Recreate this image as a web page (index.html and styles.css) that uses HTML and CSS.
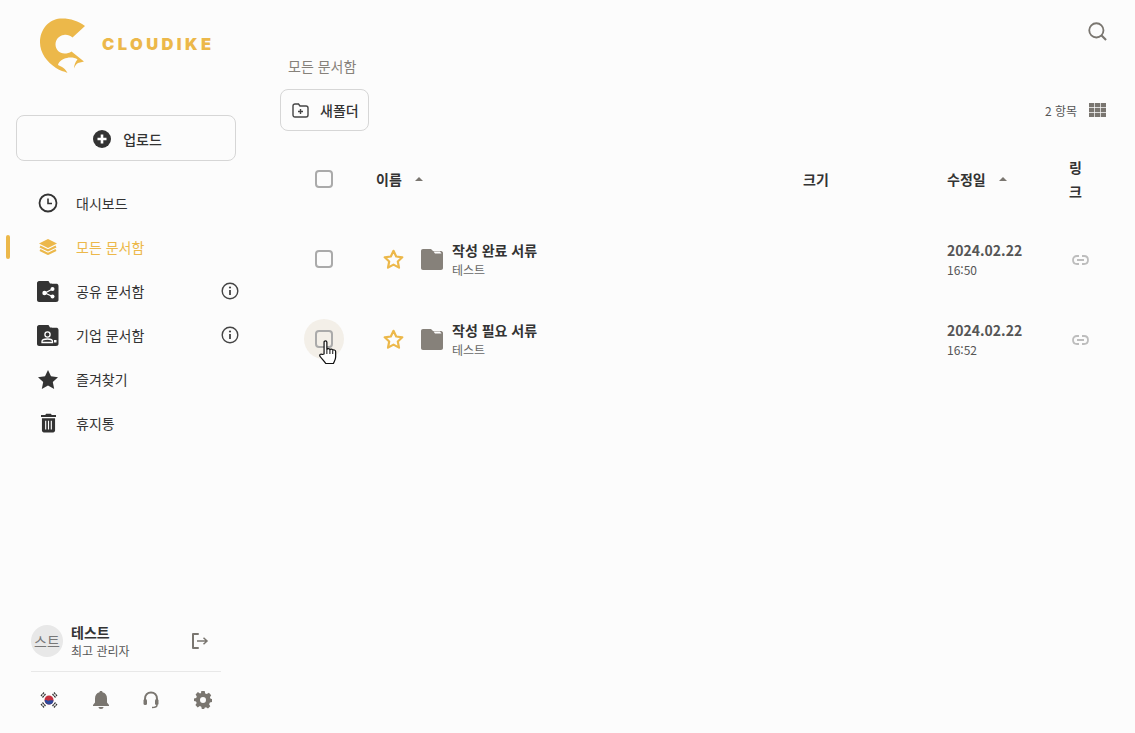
FILE: index.html
```html
<!DOCTYPE html>
<html lang="ko">
<head>
<meta charset="utf-8">
<title>Cloudike</title>
<link rel="stylesheet" href="styles.css">
</head>
<body>
<div class="app">
  <aside class="sidebar">
    <div class="logo">
      <svg class="logo-mark" width="46" height="56" viewBox="0 0 46 56"><path fill="#ecb84a" d="M20 .5C29 0 38 2.500 45 8L32.500 19.500C30 17.500 27 16.500 24 17C19 17.500 15.500 21.500 15.500 26.500C15.500 31.500 19.500 35.500 24.500 35.500C27 35.500 29.500 35 31.500 33.500L44 43.500L38 45C36 46 35 48 34 50.500C34 47 35.500 43.500 37.500 41.500C35 39.500 30 39 27 40C23 40.500 19 43 18 47L22 49C24 50 26 52 27.500 55C24 53 20 53 16 50C7 44 0 35 0 24.500C0 11 9 1.500 20 .5Z"/></svg>
      <span class="logo-text">CLOUDIKE</span>
    </div>
    <button class="upload-btn" type="button">
      <svg width="18" height="18" viewBox="0 0 18 18"><circle cx="9" cy="9" r="9" fill="#333"/><path d="M9 4.500V13.500M4.500 9H13.500" stroke="#fff" stroke-width="2.600"/></svg>
      <span>업로드</span>
    </button>
    <nav class="nav">
      <a class="nav-item"><span class="nav-icon"><svg width="20" height="20" viewBox="0 0 20 20"><circle cx="10" cy="10" r="8.500" fill="none" stroke="#333" stroke-width="1.800"/><path d="M10 5.500V10.500H14" fill="none" stroke="#333" stroke-width="1.600"/></svg></span><span>대시보드</span></a>
      <a class="nav-item active"><span class="nav-icon"><svg width="18" height="16" viewBox="0 0 18 16"><path fill="#ecb84a" d="M9 0L18 4.500L9 9L0 4.500Z"/><path fill="none" stroke="#ecb84a" stroke-width="2" d="M1 7.500L9 11.500L17 7.500M1 11L9 15L17 11"/></svg></span><span>모든 문서함</span></a>
      <a class="nav-item"><span class="nav-icon"><svg width="22" height="21" viewBox="0 0 22 21"><path fill="#333" d="M2 0H11.500L13 2.500H19C20.500 2.500 21.500 3.500 21.500 5V19C21.500 20 20.500 21 19 21H2C1 21 0 20 0 19V2C0 1 1 0 2 0Z"/><path fill="#fff" d="M14 1H18.500L20 2.500H15Z"/><path d="M15.500 8L8 12L15.500 15.500" fill="none" stroke="#fff" stroke-width="1.200"/><circle cx="15.500" cy="8" r="2" fill="#fff"/><circle cx="7.500" cy="12" r="2.200" fill="#fff"/><circle cx="15.500" cy="15.500" r="2" fill="#fff"/></svg></span><span>공유 문서함</span><svg class="info" width="18" height="18" viewBox="0 0 18 18"><circle cx="9" cy="9" r="7.800" fill="none" stroke="#444" stroke-width="1.400"/><path d="M9 8V13" stroke="#444" stroke-width="1.800"/><circle cx="9" cy="5.500" r="1.100" fill="#444"/></svg></a>
      <a class="nav-item"><span class="nav-icon"><svg width="22" height="21" viewBox="0 0 22 21"><path fill="#333" d="M2 0H11.500L13 2.500H19C20.500 2.500 21.500 3.500 21.500 5V19C21.500 20 20.500 21 19 21H2C1 21 0 20 0 19V2C0 1 1 0 2 0Z"/><path fill="#fff" d="M14 1H18.500L20 2.500H15Z"/><circle cx="10.500" cy="9.500" r="2.600" fill="none" stroke="#fff" stroke-width="1.300"/><path d="M5 17.500V16.500C5 15 7.500 14 10.500 14C13.500 14 15.500 15 15.500 16.500V17.500Z" fill="none" stroke="#fff" stroke-width="1.300"/><path d="M17 15H19.500V17.500H17Z" fill="#fff"/></svg></span><span>기업 문서함</span><svg class="info" width="18" height="18" viewBox="0 0 18 18"><circle cx="9" cy="9" r="7.800" fill="none" stroke="#444" stroke-width="1.400"/><path d="M9 8V13" stroke="#444" stroke-width="1.800"/><circle cx="9" cy="5.500" r="1.100" fill="#444"/></svg></a>
      <a class="nav-item"><span class="nav-icon"><svg width="20" height="19" viewBox="0 0 20 19"><path fill="#333" d="M10 0L13 6.300L20 7.200L14.800 12L16.200 19L10 15.500L3.800 19L5.200 12L0 7.200L7 6.300Z"/></svg></span><span>즐겨찾기</span></a>
      <a class="nav-item"><span class="nav-icon"><svg width="15" height="20" viewBox="0 0 16 20"><path fill="#333" d="M5.500 0H10.500L11.500 1.500H16V3.500H0V1.500H4.500ZM1 5H15V18C15 19 14 20 13 20H3C2 20 1 19 1 18Z"/><path d="M5 7.500V17M8 7.500V17M11 7.500V17" stroke="#fff" stroke-width="1.200"/></svg></span><span>휴지통</span></a>
    </nav>
    <div class="account">
      <div class="user">
        <span class="avatar">스트</span>
        <div class="user-info"><strong>테스트</strong><span>최고 관리자</span></div>
        <svg class="logout" width="18" height="16" viewBox="0 0 18 16"><path d="M7 1H2V15H7" fill="none" stroke="#7a7670" stroke-width="2" stroke-linecap="round" stroke-linejoin="round"/><path d="M6 8H16M12.500 4.800L16 8L12.500 11.200" fill="none" stroke="#7a7670" stroke-width="1.500"/></svg>
      </div>
      <div class="tools">
        <svg width="18" height="18" viewBox="0 0 18 18"><circle cx="9" cy="9" r="4.500" fill="#c6303e"/><path d="M4.600 9.500C6 8 7.500 10.500 9 9.500C10.500 8.500 12 10 13.500 9C13.500 12 11.500 13.500 9 13.500C6.500 13.500 4.800 11.800 4.600 9.500Z" fill="#2c4a9c"/><path d="M1 5L4 1.500M2.500 6.500L5.500 3M12.500 3L15.500 6.500M14 1.500L17 5M1 13L4 16.500M2.500 11.500L5.500 15M12.500 15L15.500 11.500M14 16.500L17 13" stroke="#333" stroke-width="1.200" stroke-dasharray="2 .6"/></svg>
        <svg width="16" height="18" viewBox="0 0 16 18"><path fill="#7a7670" d="M8 0C9 0 9.500 .5 9.500 1.300C12.500 2 14 4.500 14 7.500V11.500L16 14V15H0V14L2 11.500V7.500C2 4.500 3.500 2 6.500 1.300C6.500 .5 7 0 8 0ZM5.500 16H10.500C10.500 17 9.500 18 8 18C6.500 18 5.500 17 5.500 16Z"/></svg>
        <svg width="16" height="18" viewBox="0 0 16 18"><path d="M2 10V8C2 4 4.500 1.500 8 1.500C11.500 1.500 14 4 14 8V10" fill="none" stroke="#7a7670" stroke-width="2"/><rect x="0.500" y="8" width="3.500" height="6" rx="1.500" fill="#7a7670"/><rect x="12" y="8" width="3.500" height="6" rx="1.500" fill="#7a7670"/><path d="M14 14C14 16 12 16.500 9 16.500" fill="none" stroke="#7a7670" stroke-width="1.500"/></svg>
        <svg width="18" height="18" viewBox="0 0 18 18"><path fill="#7a7670" fill-rule="evenodd" d="M7.300 0H10.700L11.200 2.400L12.800 3.100L14.900 1.800L17.200 4.200L15.900 6.200L16.600 7.800L18 8V11L15.900 11.600L15.100 13.200L16.300 15.300L14 17.500L12 16.200L10.600 16.800L10.200 18H7.800L7.300 15.800L5.800 15.100L3.700 16.400L1.400 14.100L2.700 12L2 10.500L0 10V7.500L2.200 7L2.800 5.400L1.600 3.400L3.900 1.100L6 2.400L7 1.900ZM9 6A3 3 0 1 0 9 12A3 3 0 1 0 9 6Z"/></svg>
      </div>
    </div>
  </aside>
  <main class="main">
    <div class="topbar">
      <svg width="19" height="19" viewBox="0 0 20 20"><circle cx="8.800" cy="8.800" r="7.500" fill="none" stroke="#7a7670" stroke-width="1.900"/><path d="M14.300 14.300L19 19" stroke="#7a7670" stroke-width="2.200"/></svg>
    </div>
    <div class="crumb">모든 문서함</div>
    <div class="toolbar">
      <button class="folder-btn" type="button">
        <svg width="17" height="15" viewBox="0 0 17 15"><path d="M1 3C1 1.800 1.800 1 3 1H6.500L8 3H14C15.200 3 16 3.800 16 5V12C16 13.200 15.200 14 14 14H3C1.800 14 1 13.200 1 12Z" fill="none" stroke="#444" stroke-width="1.400"/><path d="M8.500 6V11M6 8.500H11" stroke="#444" stroke-width="1.400"/></svg>
        <span>새폴더</span>
      </button>
      <div class="view">
        <span class="count">2 항목</span>
        <svg width="17" height="14" viewBox="0 0 17 14"><path fill="#7a7670" d="M0 0H5.200V4.200H0ZM5.900 0H11.100V4.200H5.900ZM11.800 0H17V4.200H11.800ZM0 4.900H5.200V9.100H0ZM5.900 4.900H11.100V9.100H5.900ZM11.800 4.900H17V9.100H11.800ZM0 9.800H5.200V14H0ZM5.900 9.800H11.100V14H5.900ZM11.800 9.800H17V14H11.800Z"/></svg>
      </div>
    </div>
    <div class="table">
      <div class="row head">
        <div class="cell-check"><span class="check"></span></div>
        <div class="th">이름<i class="sort"></i></div>
        <div class="th">크기</div>
        <div class="th">수정일<i class="sort"></i></div>
        <div class="th link-head">링크</div>
      </div>
      <div class="row item">
        <div class="cell-check"><span class="check"></span></div>
        <div class="name-cell">
          <svg class="star" width="21" height="20" viewBox="0 0 21 20"><path fill="none" stroke="#ecb84a" stroke-width="2.200" stroke-linejoin="round" d="M10.500 1.800L13.200 7.500L19.300 8.300L14.800 12.500L16 18.600L10.500 15.600L5 18.600L6.200 12.500L1.700 8.300L7.800 7.500Z"/></svg>
          <svg width="22" height="21" viewBox="0 0 22 21"><path fill="#86817a" d="M2 0H10L12 2H20C21.200 2 22 3 22 4V19C22 20.200 21.200 21 20 21H2C.8 21 0 20.200 0 19V2C0 .8 .8 0 2 0Z"/><path fill="#fff" d="M12.500 2.500H19L20.500 4.500H14Z"/></svg>
          <div class="name-text"><strong>작성 완료 서류</strong><span>테스트</span></div>
        </div>
        <div></div>
        <div class="date"><strong>2024.02.22</strong><span>16:50</span></div>
        <div class="link-cell"><svg width="17" height="10" viewBox="0 0 17 10"><path d="M7 1H5C2.500 1 1 2.800 1 5C1 7.200 2.500 9 5 9H7M10 1H12C14.500 1 16 2.800 16 5C16 7.200 14.500 9 12 9H10M5 5H12" fill="none" stroke="#bdbdbd" stroke-width="1.800"/></svg></div>
      </div>
      <div class="row item">
        <div class="cell-check"><span class="hover-dot"><span class="check"></span></span>
          <svg class="cursor" width="18" height="25" viewBox="0 0 16 25" preserveAspectRatio="none"><path fill="#fff" stroke="#111" stroke-width="1.100" stroke-linejoin="round" d="M4.500 14V2.200C4.500 .4 7 .4 7 2.200V9.500C7.300 8.300 9.500 8.300 9.700 9.800C10 8.800 12 8.800 12.200 10.300C12.500 9.600 14.800 9.700 14.800 11.500V17C14.800 20 13.500 21.500 12.800 23.500H6C4.500 21 3 19.500 1 16.500C0 15 1.500 13.300 3 14.500Z"/><path d="M7 10V14M9.700 10V14M12.200 10.500V14" stroke="#111" stroke-width=".9"/></svg>
        </div>
        <div class="name-cell">
          <svg class="star" width="21" height="20" viewBox="0 0 21 20"><path fill="none" stroke="#ecb84a" stroke-width="2.200" stroke-linejoin="round" d="M10.500 1.800L13.200 7.500L19.300 8.300L14.800 12.500L16 18.600L10.500 15.600L5 18.600L6.200 12.500L1.700 8.300L7.800 7.500Z"/></svg>
          <svg width="22" height="21" viewBox="0 0 22 21"><path fill="#86817a" d="M2 0H10L12 2H20C21.200 2 22 3 22 4V19C22 20.200 21.200 21 20 21H2C.8 21 0 20.200 0 19V2C0 .8 .8 0 2 0Z"/><path fill="#fff" d="M12.500 2.500H19L20.500 4.500H14Z"/></svg>
          <div class="name-text"><strong>작성 필요 서류</strong><span>테스트</span></div>
        </div>
        <div></div>
        <div class="date"><strong>2024.02.22</strong><span>16:52</span></div>
        <div class="link-cell"><svg width="17" height="10" viewBox="0 0 17 10"><path d="M7 1H5C2.500 1 1 2.800 1 5C1 7.200 2.500 9 5 9H7M10 1H12C14.500 1 16 2.800 16 5C16 7.200 14.500 9 12 9H10M5 5H12" fill="none" stroke="#bdbdbd" stroke-width="1.800"/></svg></div>
      </div>
    </div>
  </main>
</div>
</body>
</html>
```
FILE: styles.css
```css
* { box-sizing: border-box; }
html, body { margin: 0; height: 100%; }
body {
  background: #fcfcfc;
  color: #333;
  font-family: "Noto Sans CJK KR", "Noto Sans", sans-serif;
  font-size: 14px;
  overflow: hidden;
}
svg { display: block; flex: none; }
.app { display: flex; height: 733px; }

.sidebar { width: 260px; flex: none; display: flex; flex-direction: column; padding: 0 16px; }
.logo { height: 115px; display: flex; align-items: flex-start; padding: 18px 0 0 24px; }
.logo-mark { margin-right: 16px; }
.logo-text {
  font-family: Inter, sans-serif;
  font-weight: 900;
  font-size: 16.5px;
  line-height: 18px;
  letter-spacing: 3.4px;
  color: #ecb84a;
  margin-top: 17px;
}
.upload-btn {
  width: 220px; height: 46px;
  display: flex; align-items: center; justify-content: center; gap: 12px;
  padding: 1px 0 0 3px;
  background: transparent;
  border: 1px solid #d6d6d6; border-radius: 8px;
  font: 500 14px "Noto Sans CJK KR", sans-serif;
  color: #333;
}
.nav { margin-top: 20px; display: flex; flex-direction: column; }
.nav-item { height: 44px; display: flex; align-items: center; position: relative; color: #333; }
.nav-icon { width: 60px; padding: 0 16px 0 20px; display: flex; justify-content: center; }
.nav-item.active { color: #ecb84a; }
.nav-item.active::before {
  content: ""; position: absolute; left: -10px; top: 10px;
  width: 4px; height: 24px; border-radius: 2px; background: #ecb84a;
}
.info { position: absolute; left: 205px; top: 13px; }

.account { margin-top: auto; padding: 0 23px 4px 15px; }
.user { display: flex; align-items: center; height: 46px; padding-bottom: 2px; }
.avatar {
  width: 32px; height: 32px; border-radius: 50%;
  background: #e8e8e8; color: #777;
  font-size: 14px; display: flex; align-items: center; justify-content: center;
}
.user-info { margin-left: 8px; display: flex; flex-direction: column; }
.user-info strong { font-size: 14px; font-weight: 700; line-height: 20px; color: #333; }
.user-info span { font-size: 12px; line-height: 18px; color: #555; }
.logout { margin-left: auto; margin-right: 12px; }
.tools {
  margin-top: 6px;
  border-top: 1px solid #e8e8e8;
  height: 58px;
  display: flex; align-items: center; justify-content: space-between;
  padding: 0 9px 2px;
}

.main { flex: 1; min-width: 0; padding: 0 20px; display: flex; flex-direction: column; }
.topbar { height: 56px; display: flex; justify-content: flex-end; padding: 22px 8px 0 0; }
.crumb { font-size: 14px; line-height: 20px; color: #86817a; padding-left: 8px; }
.toolbar { margin-top: 13px; display: flex; justify-content: space-between; align-items: center; }
.folder-btn {
  width: 89px; height: 42px;
  display: flex; align-items: center; gap: 11px; padding: 0 0 0 11px;
  background: transparent; border: 1px solid #d6d6d6; border-radius: 8px;
  font: 500 14px "Noto Sans CJK KR", sans-serif; color: #333;
}
.view { display: flex; align-items: center; gap: 12px; padding-right: 9px; }
.count { font-size: 12px; color: #555; }

.table { margin: 24px 0 0 16px; }
.row { display: grid; grid-template-columns: 80px 427px 144px 122px 38px; align-items: center; }
.head { height: 48px; margin-bottom: 16px; }
.item { height: 80px; }
.cell-check { position: relative; display: flex; justify-content: center; width: 56px; }
.check {
  display: block; width: 18px; height: 18px;
  border: 2px solid #aaa; border-radius: 4px;
}
.hover-dot {
  width: 40px; height: 40px; border-radius: 50%;
  background: #f3efe8;
  display: flex; align-items: center; justify-content: center;
}
.cursor { position: absolute; left: 23px; top: 21px; }
.th { font-size: 14px; font-weight: 700; color: #333; display: flex; align-items: center; }
.sort {
  width: 0; height: 0; margin-left: 13px;
  border-left: 4px solid transparent; border-right: 4px solid transparent;
  border-bottom: 4px solid #7a7670;
}
.link-head { width: 14px; line-height: 24px; word-break: break-all; }
.name-cell { display: flex; align-items: center; padding-left: 7px; }
.star { margin-right: 17px; }
.name-text { margin-left: 9px; padding-top: 2px; display: flex; flex-direction: column; }
.name-text strong { font-size: 14px; font-weight: 700; line-height: 20px; color: #333; }
.name-text span { font-size: 12px; line-height: 20px; color: #666; }
.date { padding-top: 2px; display: flex; flex-direction: column; }
.date strong { font-size: 14px; font-weight: 700; line-height: 20px; color: #555; }
.date span { font-size: 12px; line-height: 20px; color: #555; }
.link-cell { padding: 2px 0 0 3px; }
```
